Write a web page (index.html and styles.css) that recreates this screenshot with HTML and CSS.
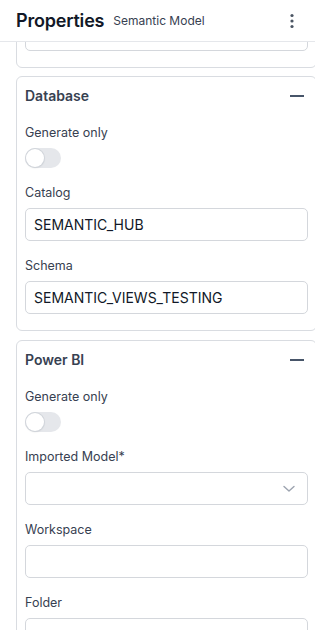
FILE: index.html
```html
<!DOCTYPE html>
<html>
<head>
<meta charset="utf-8">
<link rel="stylesheet" href="styles.css">
</head>
<body>
<div class="panel">
  <header class="header">
    <h1 class="title">Properties</h1>
    <span class="subtitle">Semantic Model</span>
    <button class="kebab" aria-label="More">
      <svg width="4" height="16" viewBox="0 0 4 16"><circle cx="2" cy="2.5" r="1.6" fill="#4b5563"/><circle cx="2" cy="8" r="1.6" fill="#4b5563"/><circle cx="2" cy="13.5" r="1.6" fill="#4b5563"/></svg>
    </button>
  </header>
  <div class="scroll">
    <div class="content">
      <section class="card card-partial">
        <div class="input"></div>
      </section>

      <section class="card">
        <div class="card-head">
          <h2 class="card-title">Database</h2>
          <span class="dash"></span>
        </div>
        <div class="fields">
          <div class="field">
            <label class="label">Generate only</label>
            <span class="toggle"><span class="knob"></span></span>
          </div>
          <div class="field">
            <label class="label">Catalog</label>
            <div class="input">SEMANTIC_HUB</div>
          </div>
          <div class="field">
            <label class="label">Schema</label>
            <div class="input">SEMANTIC_VIEWS_TESTING</div>
          </div>
        </div>
      </section>

      <section class="card card-last">
        <div class="card-head">
          <h2 class="card-title">Power BI</h2>
          <span class="dash"></span>
        </div>
        <div class="fields">
          <div class="field">
            <label class="label">Generate only</label>
            <span class="toggle"><span class="knob"></span></span>
          </div>
          <div class="field">
            <label class="label">Imported Model*</label>
            <div class="input select">
              <svg class="chev" width="12" height="8" viewBox="0 0 12 8"><path d="M1 1.5 L6 6 L11 1.5" fill="none" stroke="#9ca3af" stroke-width="1.4" stroke-linecap="round" stroke-linejoin="round"/></svg>
            </div>
          </div>
          <div class="field">
            <label class="label">Workspace</label>
            <div class="input"></div>
          </div>
          <div class="field">
            <label class="label">Folder</label>
            <div class="input"></div>
          </div>
        </div>
      </section>
    </div>
  </div>
</div>
</body>
</html>
```

FILE: styles.css
```css
* { box-sizing: border-box; }
html, body { margin: 0; padding: 0; }
body {
  width: 315px;
  height: 630px;
  overflow: hidden;
  background: #ffffff;
  font-family: Inter, "Noto Sans", "Liberation Sans", sans-serif;
  color: #374151;
}
.panel {
  width: 315px;
  height: 630px;
  display: flex;
  flex-direction: column;
  overflow: hidden;
}
.header {
  height: 42px;
  flex: 0 0 42px;
  border-bottom: 1px solid #e5e7eb;
  display: flex;
  align-items: center;
  padding: 0 16px;
  background: #fff;
  position: relative;
  z-index: 1;
}
.title {
  margin: 0;
  font-size: 18px;
  font-weight: 600;
  color: #111827;
  letter-spacing: -0.2px;
  line-height: 24px;
}
.subtitle {
  margin-left: 9px;
  font-size: 12px;
  color: #374151;
  line-height: 24px;
  padding-top: 1px;
}
.kebab {
  margin-left: auto;
  margin-right: 2px;
  border: 0;
  background: none;
  padding: 0;
  width: 10px;
  height: 20px;
  display: flex;
  align-items: center;
  justify-content: center;
}
.scroll {
  flex: 1;
  overflow: hidden;
}
.content {
  padding-left: 16px;
  width: 320px;
  display: flex;
  flex-direction: column;
  gap: 8px;
}
.card {
  width: 301px;
  border: 1px solid #d9dce1;
  border-radius: 6px;
  padding: 0 8px 16px;
}
.card-partial {
  margin-top: -25px;
  border-top-left-radius: 0;
  border-top-right-radius: 0;
}
.card-last {
  margin-top: 1px;
}
.card-head {
  display: flex;
  align-items: center;
  justify-content: space-between;
  padding: 9px 0 11px;
  height: 40px;
}
.card-title {
  margin: 0;
  font-size: 14px;
  font-weight: 600;
  color: #374151;
  line-height: 20px;
}
.dash {
  width: 14px;
  height: 2px;
  background: #475569;
  margin-right: 4px;
}
.fields {
  padding-top: 6px;
  display: flex;
  flex-direction: column;
  gap: 15px;
}
.field {
  display: flex;
  flex-direction: column;
  gap: 6px;
}
.label {
  font-size: 12.5px;
  line-height: 19px;
  color: #374151;
}
.toggle {
  width: 36px;
  height: 20px;
  border-radius: 10px;
  background: #e5e7eb;
  display: flex;
  align-items: center;
  padding: 1px;
}
.knob {
  width: 18px;
  height: 18px;
  border-radius: 50%;
  background: #ffffff;
  box-shadow: 0 0 0 1px #d1d5db, 0 1px 2px rgba(0,0,0,0.12);
}
.input {
  height: 33px;
  border: 1px solid #d4d7dc;
  border-radius: 5px;
  padding: 0 8px;
  display: flex;
  align-items: center;
  font-size: 14px;
  color: #111827;
}
.select {
  justify-content: flex-end;
  padding-right: 12px;
}
```
